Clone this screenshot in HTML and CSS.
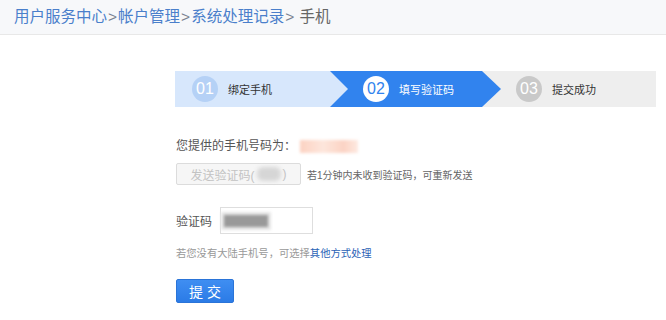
FILE: index.html
```html
<!DOCTYPE html>
<html lang="zh-CN">
<head>
    <meta charset="UTF-8">
    <meta name="viewport" content="width=device-width, initial-scale=1.0">
    <title>手机</title>
    <link rel="stylesheet" href="styles.css">
</head>
<body>

    <!-- 面包屑 -->
    <div class="crumbs">
        <a href="#">用户服务中心</a><span class="sep">&gt;</span><a href="#">帐户管理</a><span class="sep">&gt;</span><a href="#">系统处理记录</a><span class="sep">&gt;</span> <span class="current">手机</span>
    </div>

    <div class="main">
        <!-- 步骤条 -->
        <div class="steps">
            <div class="step step-done">
                <span class="num">01</span>
                <span class="label">绑定手机</span>
            </div>
            <div class="step step-active">
                <span class="num">02</span>
                <span class="label">填写验证码</span>
            </div>
            <div class="step step-todo">
                <span class="num">03</span>
                <span class="label">提交成功</span>
            </div>
        </div>

        <div class="phone-row">
            您提供的手机号码为：<span class="blur-phone"></span>
        </div>

        <div class="send-row">
            <button class="send-btn" disabled>发送验证码(<span class="blur-count"></span>)</button>
            <span class="notice">若1分钟内未收到验证码，可重新发送</span>
        </div>

        <div class="code-row">
            <span class="code-label">验证码</span>
            <div class="code-input"><span class="blur-code"></span></div>
        </div>

        <div class="hint">若您没有大陆手机号，可选择<a href="#">其他方式处理</a></div>

        <button class="submit-btn">提 交</button>
    </div>

</body>
</html>
```

FILE: styles.css
```css
body {
    font-family: "Liberation Sans", "Noto Sans CJK SC", sans-serif;
    background-color: #fff;
    margin: 0;
    padding: 0;
    color: #555;
}

a {
    text-decoration: none;
}

.crumbs {
    height: 34px;
    line-height: 34px;
    padding-left: 14px;
    font-size: 15.5px;
    background-color: #f7f8fa;
    border-bottom: 1px solid #e8e8e8;
}

.crumbs a {
    color: #4a7fcb;
}

.crumbs .sep {
    color: #7a8290;
    margin: 0 1px;
}

.crumbs .current {
    color: #666;
}

.main {
    padding-left: 176px;
}

.steps {
    display: flex;
    margin-top: 36px;
    height: 36px;
    margin-left: -1px;
}

.step {
    display: flex;
    align-items: center;
    height: 36px;
    font-size: 11px;
    box-sizing: border-box;
}

.step .num {
    width: 26px;
    height: 26px;
    line-height: 26px;
    border-radius: 50%;
    text-align: center;
    font-size: 16px;
    margin-right: 10px;
}

.step-done {
    width: 173px;
    padding-left: 17px;
    margin-right: -18px;
    background-color: #d7e7fc;
    color: #333;
    z-index: 3;
    clip-path: polygon(0 0, calc(100% - 18px) 0, 100% 50%, calc(100% - 18px) 100%, 0 100%);
}

.step-done .num {
    background-color: #b5d1f6;
    color: #fff;
}

.step-active {
    width: 171px;
    padding-left: 33px;
    margin-right: -19px;
    background-color: #3183ee;
    color: #fff;
    z-index: 2;
    clip-path: polygon(0 0, calc(100% - 19px) 0, 100% 50%, calc(100% - 19px) 100%, 0 100%);
}

.step-active .num {
    background-color: #fff;
    color: #3183ee;
}

.step-todo {
    width: 174px;
    padding-left: 34px;
    background-color: #eeeeee;
    color: #333;
    z-index: 1;
}

.step-todo .num {
    background-color: #c9c9c9;
    color: #fff;
}

.phone-row {
    margin-top: 29px;
    height: 20px;
    line-height: 20px;
    font-size: 12px;
    color: #555;
    display: flex;
    align-items: center;
}

.blur-phone {
    display: inline-block;
    width: 58px;
    height: 13px;
    margin-left: 4px;
    background: linear-gradient(90deg, #fcd2c2, #fde6dc 40%, #fbd3c4 75%, #fee9e1);
    filter: blur(1.5px);
}

.send-row {
    margin-top: 7px;
    display: flex;
    align-items: center;
}

.send-btn {
    width: 125px;
    height: 22px;
    padding: 0;
    font-family: inherit;
    font-size: 12px;
    color: #c3c3c3;
    background-color: #f6f6f6;
    border: 1px solid #dcdcdc;
    border-radius: 2px;
    display: flex;
    align-items: center;
    justify-content: center;
}

.blur-count {
    display: inline-block;
    width: 24px;
    height: 14px;
    margin: 0 2px;
    background-color: #d6d6d6;
    border-radius: 6px;
    filter: blur(2px);
}

.notice {
    margin-left: 6px;
    font-size: 10px;
    color: #666;
}

.code-row {
    margin-top: 22px;
    display: flex;
    align-items: center;
}

.code-label {
    width: 44px;
    font-size: 12px;
    color: #555;
}

.code-input {
    width: 93px;
    height: 27px;
    box-sizing: border-box;
    border: 1px solid #dedede;
    background-color: #fff;
    display: flex;
    align-items: center;
}

.blur-code {
    display: inline-block;
    width: 44px;
    height: 12px;
    margin-left: 3px;
    background-color: #999;
    box-shadow: 0 0 0 3px #e6e6e6;
    filter: blur(1.5px);
}

.hint {
    margin-top: 12px;
    line-height: 16px;
    font-size: 10.3px;
    color: #999;
}

.hint a {
    color: #2a62b6;
}

.submit-btn {
    display: block;
    margin-top: 17px;
    width: 58px;
    height: 24px;
    padding: 0;
    font-family: inherit;
    font-size: 14px;
    color: #fff;
    background: linear-gradient(#3f8ef2, #2b7be6);
    border: 1px solid #2a74d8;
    border-radius: 2px;
    cursor: pointer;
}
```
